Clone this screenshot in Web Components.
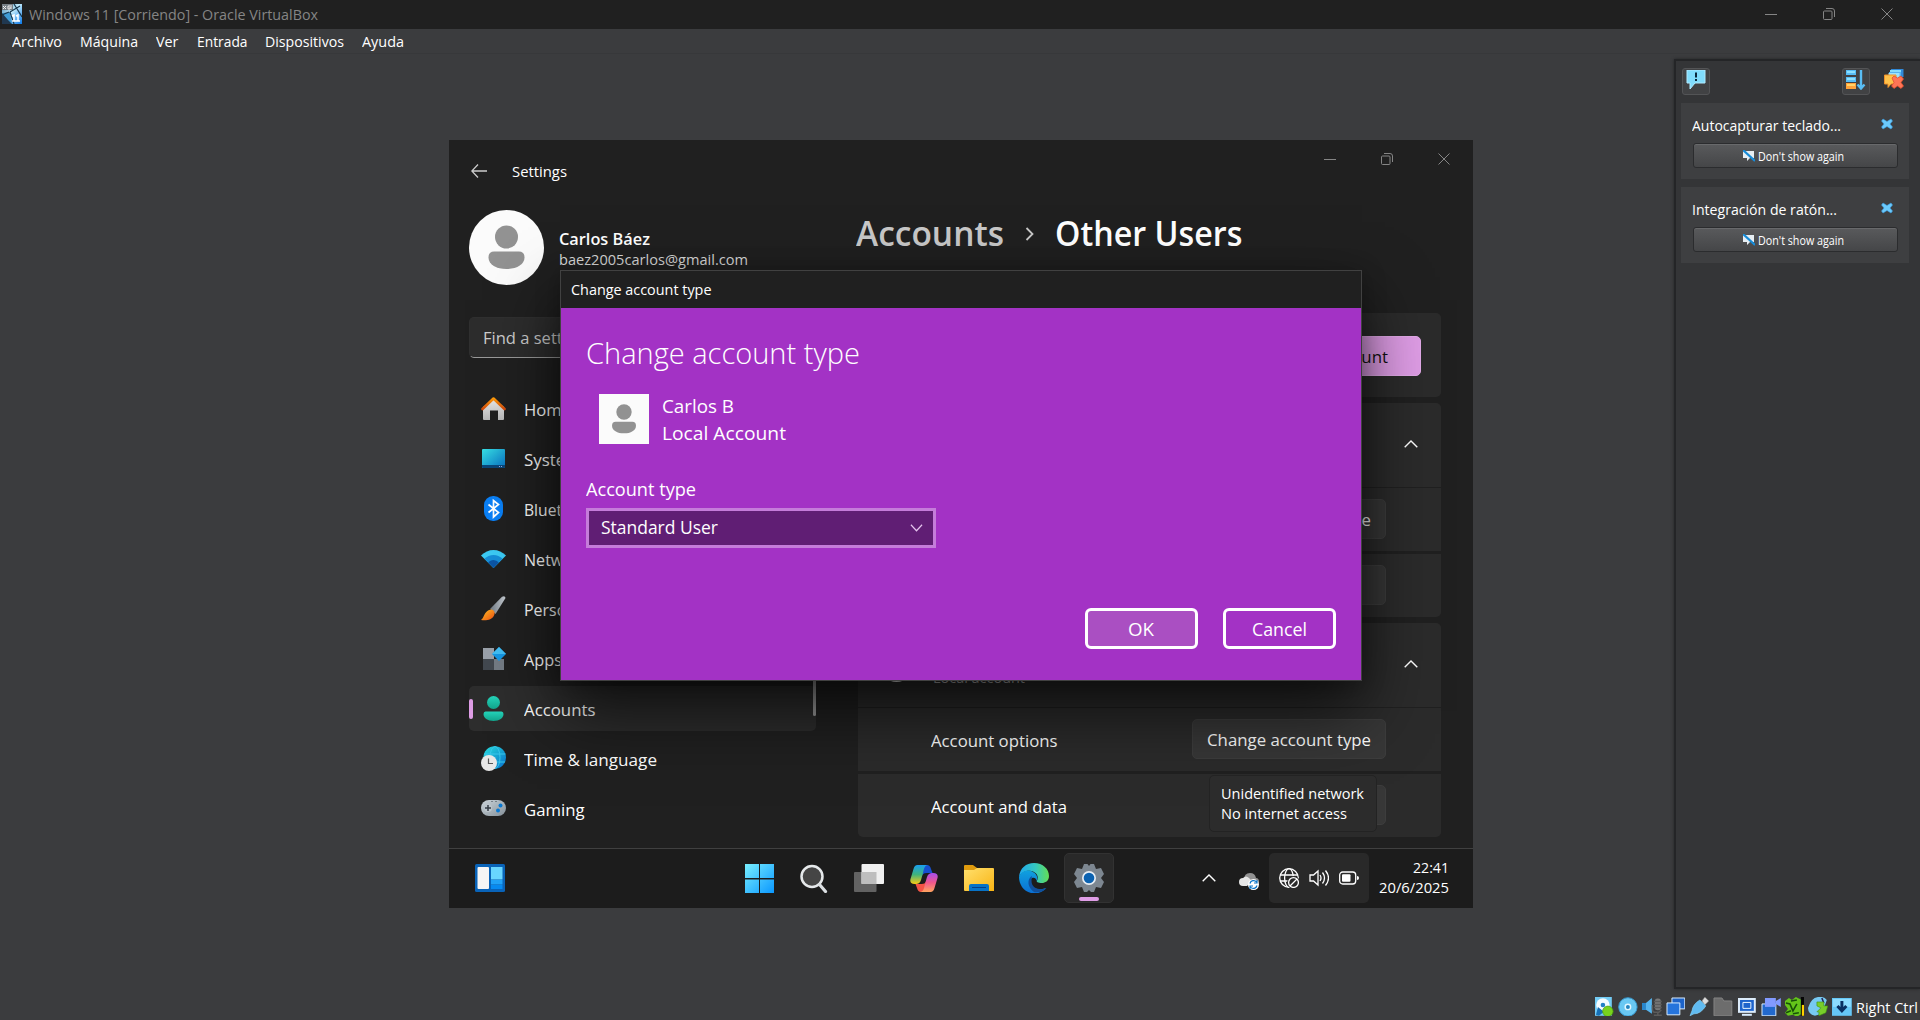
<!DOCTYPE html>
<html lang="es">
<head>
<meta charset="utf-8">
<title>Windows 11 [Corriendo] - Oracle VirtualBox</title>
<style>
html,body{margin:0;height:100%;overflow:hidden;background:#3b3c3e}
body{font-family:"Open Sans","Noto Sans",sans-serif;color:#fff}
</style>
</head>
<body>
<vbox-window></vbox-window>
<script>
const icons = {
vbox:['0 0 20 20','<defs><linearGradient id="a" x2="1" y2="1"><stop stop-color="#4c87b0"/><stop offset=".45" stop-color="#bfe9fb"/><stop offset="1" stop-color="#0877e8"/></linearGradient></defs><path d="M0 0h20v20H0z" fill="url(#a)"/><path d="M0 0h11v6H0z" fill="#777f86"/><path d="M1 2l3 3m0-3L1 5m7-3H6v3h2V3M9 1v4" stroke="#eee" fill="none"/><path d="M0 9l8-1 2 12H0z" fill="#3e9bd5"/><path d="M0 9l6 7 4 4H0z" fill="#203850"/><path d="M8 8L18 2M8 8l4 12M12 0l8 13M7 8L0 11" stroke="#17384f" stroke-width="1.2" fill="none"/><path d="M10 12l2-1v6m-2 0h4m0-5l2-1v6m-2 0h4" stroke="#fff" stroke-width="1.5" fill="none"/>'],
min:['0 0 12 12','<path d="M0 6.5h12" stroke="currentColor"/>'],
restore:['0 0 12 12','<path d="M.5 4q0-1 1-1H8q1 0 1 1v6.500q0 1-1 1H1.500q-1 0-1-1zM3 .5h6q2.500 0 2.500 2.500v6" fill="none" stroke="currentColor"/>'],
close:['0 0 12 12','<path d="M.5.5l11 11M11.500.5l-11 11" stroke="currentColor"/>'],
back:['0 0 16 14','<path d="M16 7H1M7 .5L.8 7 7 13.500" stroke="#ccc" stroke-width="1.300" fill="none"/>'],
user:['0 0 75 75','<path d="M0 0h75v75H0z" fill="#fbfbfb"/><circle cx="37.500" cy="27" r="11.500" fill="#929292"/><path d="M25 41.500h25q5.500 0 5.500 6c0 7-8 11.500-18 11.500s-18-4.500-18-11.500q0-6 5.500-6z" fill="#929292"/>'],
up:['0 0 14 8','<path d="M.7 7.300L7 1l6.300 6.300" stroke="#fff" stroke-width="1.400" fill="none"/>'],
down:['0 0 14 8','<path d="M1 .8l6 6 6-6" stroke="#e5c5ee" stroke-width="1.300" fill="none"/>'],
right:['0 0 9 14','<path d="M1.500 1l6 6-6 6" stroke="#c8c8c8" stroke-width="1.800" fill="none"/>'],
home:['0 0 25 25','<defs><linearGradient id="a" x2="0" y2="1"><stop stop-color="#e8e8e8"/><stop offset="1" stop-color="#b8b8b8"/></linearGradient><linearGradient id="b" x2="0" y2="1"><stop stop-color="#ff9a0a"/><stop offset="1" stop-color="#d24a0b"/></linearGradient></defs><path d="M2 11L12.500 3 23 11v12q0 1-1 1h-5v-9.500H9V24H3q-1 0-1-1z" fill="url(#a)"/><path d="M1.500 13L12.500 2.500 23.500 13" fill="none" stroke="url(#b)" stroke-width="2.600" stroke-linecap="round" stroke-linejoin="round"/>'],
system:['0 0 25 25','<defs><linearGradient id="a" x2="1" y2="1"><stop stop-color="#37e0e4"/><stop offset="1" stop-color="#0871c4"/></linearGradient></defs><rect x="1" y="3" width="23" height="19" rx="1" fill="url(#a)"/><path d="M1 19h23v2q0 1-1 1H2q-1 0-1-1z" fill="#0a4679"/><path d="M18 20.500h1m1 0h1" stroke="#9ad"/>'],
bt:['0 0 25 25','<rect x="3" y="0" width="19" height="25" rx="9" fill="#0a7ff5"/><path d="M7.500 8.500l10 8-5 4.500V4.500l5 4-10 8" fill="none" stroke="#fff" stroke-width="1.700"/>'],
wifi:['0 0 25 25','<path d="M12.500 4C8 4 3.500 6 0 9.500L12.500 22 25 9.500C21.500 6 17 4 12.500 4z" fill="#3ccbf4"/><path d="M12.500 9c-3.500 0-6.500 1.300-9 3.800l9 9.200 9-9.200c-2.500-2.500-5.500-3.800-9-3.800z" fill="#168ed8"/><path d="M12.500 14c-2 0-4 .9-5.300 2.400L12.500 22l5.300-5.600A7.500 7.500 0 0012.500 14z" fill="#0c55a5"/>'],
brush:['0 0 25 25','<defs><linearGradient id="a" x2="1"><stop stop-color="#6f7983"/><stop offset="1" stop-color="#c6ccd2"/></linearGradient><linearGradient id="b" x2="1" y2="1"><stop stop-color="#ffc525"/><stop offset="1" stop-color="#ef4d12"/></linearGradient></defs><path d="M9 13L21 .8q3-1.500 3.500 1.200L14.500 18z" fill="url(#a)"/><path d="M8 14c4-2 7 2 5 5.500C11 24 5 25 0 24c3-2 3-8 8-10z" fill="url(#b)"/>'],
apps:['0 0 25 25','<path d="M2 2h11v11H2z" fill="#9aa1aa"/><path d="M2 13h11v11H2z" fill="#42484f"/><path d="M13 13h10v11H13z" fill="#737b84"/><path d="M18 1l7 7-7 7-7-7z" fill="#1597e5"/><path d="M18 1l7 7h-14z" fill="#42bef4"/>'],
account:['0 0 25 25','<defs><linearGradient id="a" x2="0" y2="1"><stop stop-color="#25d5bb"/><stop offset="1" stop-color="#12a58d"/></linearGradient></defs><circle cx="12.500" cy="6.500" r="6.500" fill="url(#a)"/><path d="M4.500 15.500h16q2 0 2 2.500c0 4-4 7-10 7s-10-3-10-7q0-2.500 2-2.500z" fill="url(#a)"/>'],
time:['0 0 25 25','<defs><linearGradient id="a" x2="1" y2="1"><stop stop-color="#28dfdc"/><stop offset="1" stop-color="#086dcb"/></linearGradient></defs><circle cx="13.700" cy="11.500" r="11.300" fill="url(#a)"/><path d="M3 8h21.500M4 16h20" stroke="#39c7eb"/><ellipse cx="14" cy="11.500" rx="5" ry="11" fill="none" stroke="#39c7eb"/><circle cx="8" cy="17" r="8" fill="#e7e7e7"/><path d="M7.500 12.500V17.500H12" fill="none" stroke="#555" stroke-width="1.200"/>'],
game:['0 0 25 25','<defs><linearGradient id="a" x2="1" y2="1"><stop stop-color="#ccd4da"/><stop offset="1" stop-color="#849099"/></linearGradient></defs><rect y="4" width="25" height="16" rx="8" fill="url(#a)"/><circle cx="7" cy="12" r="4" fill="#bcc5cc"/><path d="M4 12h6M7 9v6" stroke="#353d46" stroke-width="1.500"/><circle cx="19.500" cy="9.500" r="2" fill="#0878d1"/><circle cx="17" cy="14.500" r="2" fill="#0878d1"/><path d="M10.500 5.500h1m3 0h1" stroke="#37404a"/>'],
widgets:['0 0 30 28','<rect width="30" height="28" rx="1.500" fill="#0963b8"/><rect x="2.500" y="3" width="11.500" height="22" rx="1" fill="#f5f5f5"/><path d="M16 3h11.500v12.500H16z" fill="#69d6ff"/><path d="M16 16h11.500v4.500H16z" fill="#20a2f7"/><path d="M16 21h11.500v4H16z" fill="#078af0"/>'],
start:['0 0 29 29','<defs><linearGradient id="a" gradientUnits="userSpaceOnUse" x2="29" y2="29"><stop stop-color="#78efff"/><stop offset="1" stop-color="#0a97ff"/></linearGradient></defs><path d="M0 0h14v14H0zM15 0h14v14H15zM0 15.500h14V29H0zM15 15.500h14V29H15z" fill="url(#a)"/>'],
search:['0 0 28 29','<circle cx="12" cy="12.500" r="10.500" fill="#454545" stroke="#e6e9eb" stroke-width="2.500"/><path d="M19.500 20.500l6 7" stroke="#dce0e3" stroke-width="3.200" stroke-linecap="round"/>'],
task:['0 0 30 28','<rect y="8" width="22.500" height="20" rx="1" fill="#626262"/><rect x="7.500" width="22.500" height="20" rx="1" fill="#f0f0f0"/><path d="M7.500 8h15v12h-15z" fill="#bebebe"/>'],
copilot:['0 0 28 27','<defs><linearGradient id="a" x2="0" y2="1"><stop stop-color="#199ff0"/><stop offset=".5" stop-color="#3fb47c"/><stop offset="1" stop-color="#fccd13"/></linearGradient><linearGradient id="b" x2="0" y2="1"><stop stop-color="#a44df0"/><stop offset=".5" stop-color="#ef568d"/><stop offset="1" stop-color="#ffa45f"/></linearGradient></defs><path d="M14 0h3q3 0 4 4l1.500 4h-6c-3 0-4 1-5 4z" fill="#164fd0"/><path d="M14 27h-3q-3 0-4-4l-1.500-4h6c3 0 4-1 5-4z" fill="#f35345"/><path d="M7.500 0H18c-3 0-4 3-5 8l-2 7c-1 3-3 4-5 4C1 19.500-.3 17 .5 14L3.500 4q1-4 4-4z" fill="url(#a)"/><path d="M20.500 27H10c3 0 4-3 5-8l2-7c1-3 3-4 5-4 5-.5 6.300 2 5.500 5l-3 10q-1 4-4 4z" fill="url(#b)"/>'],
folder:['0 0 30 27','<defs><linearGradient id="a" x2="1" y2="1"><stop stop-color="#ffe06d"/><stop offset="1" stop-color="#f9b414"/></linearGradient></defs><path d="M0 1q0-1 1-1h8l4 3v4H0z" fill="#df9b0d"/><path d="M0 5h10l3-2h16q1 0 1 1v22H1q-1 0-1-1z" fill="url(#a)"/><path d="M5 26v-5q0-2 2-2h16q2 0 2 2v5z" fill="#0873c7"/><path d="M8 22.500h14" stroke="#063f86"/>'],
edge:['0 0 30 30','<defs><linearGradient id="a" x2="1"><stop stop-color="#20a8ee"/><stop offset=".55" stop-color="#35c8c0"/><stop offset="1" stop-color="#63df55"/></linearGradient><linearGradient id="b" x2="0" y2="1"><stop stop-color="#0fa0df"/><stop offset="1" stop-color="#0b6fd3"/></linearGradient></defs><path d="M0 14C1 5 7 0 15 0c9 0 15 6 15 13 0 5-4 7-7 7-4 0-6-1-5-2.500C20 14 18 9 12 8 7 7 2 10 0 14z" fill="url(#a)"/><path d="M0 14C2 8 9 6 14 9c4 2 5 6 4 9-1-3-3-4-5-3-2 2-2 5 0 8 3 4 8 4 14 2-4 5-9 6-15 5C4 28 0 21 0 14z" fill="url(#b)"/><path d="M13 13C8 16 8 24 15 29c6 1 10-1 12.500-4-7 3-13 0-14.500-4-.8-2.500-.5-6 0-8z" fill="#10509d"/>'],
gear:['0 0 30 30','<path d="M12 1h1.500l1.500 2 1.500-2H20l2 5 5-1 3 6-3 4 3 4-3 6-5-1-2 5h-3l-2-2-2 2h-3l-2-5-5 1-3-6 3-4-3-4 3-6 5 1 2-5z" fill="#7d8791"/><circle cx="15" cy="15" r="7" fill="#e7eef5"/><circle cx="15" cy="15" r="5.300" fill="#0b62b1"/>'],
cloud:['0 0 20 18','<path d="M5 8Q5 1 11 1q5 0 6 5 3 0 3 4l-4 3H6z" fill="#929292"/><path d="M0 10q0-4 4-4 3-3 6 0l3 3-5 5H4q-4 0-4-4z" fill="#e6e6e6"/><circle cx="14.500" cy="12.500" r="5.500" fill="#fff"/><path d="M11 11.500a3.700 3.700 0 016.500-1.500m.5 3.500a3.700 3.700 0 01-6.500 1.500M18 8v3h-3m-4 6v-3h3" fill="none" stroke="#0873c8" stroke-width="1.200"/>'],
globe:['0 0 20 20','<g fill="none" stroke="#fff" stroke-width="1.300"><circle cx="10" cy="10" r="9.300"/><ellipse cx="10" cy="10" rx="4.400" ry="9.300"/><path d="M1 7h18M1 13h18"/></g><circle cx="14.500" cy="14.500" r="6.500" fill="#292929"/><circle cx="14.500" cy="14.500" r="4.900" fill="none" stroke="#fff" stroke-width="1.300"/><path d="M11 18l7-7" stroke="#fff" stroke-width="1.300"/>'],
sound:['0 0 20 20','<g fill="none" stroke="#fff" stroke-width="1.300"><path d="M1 7h3.500L9 3v14l-4.500-4H1z"/><path d="M11 7q2 3 0 6m2.500-8.500q4 5.500 0 11m3-13q6 7.500 0 15"/></g>'],
battery:['0 0 20 14','<rect x=".7" y="1" width="16" height="12" rx="3" fill="none" stroke="#fff" stroke-width="1.300"/><rect x="3" y="3.300" width="8.500" height="7.400" rx="1" fill="#fff"/><path d="M18 5q2 0 2 2t-2 2z" fill="#fff"/>'],
notice:['0 0 20 20','<path d="M1 0h18v13H9l-5 6v-6H1z" fill="#80dcfc" stroke="#afeaff"/><path d="M10 2.500v5" stroke="#09263b" stroke-width="2"/><path d="M10 9v2" stroke="#09263b" stroke-width="2"/>'],
sort:['0 0 20 20','<path d="M0 0h10v5H0zM0 7h10v5H0z" fill="#57bdf6"/><path d="M0 13h10v6H0z" fill="#ffa23a"/><path d="M1 1h8v2H1zM1 8h8v2H1z" fill="#8ce0ff"/><path d="M1 14h8v2H1z" fill="#ffd36a"/><path d="M15 0v17M11.500 14.500L15 18.500l3.500-4" stroke="#59bdf4" stroke-width="2.400" fill="none"/>'],
clear:['0 0 20 20','<path d="M7 0h12.500v8H7z" fill="#3189d8"/><path d="M6 1h11v7H6z" fill="#86dcfb"/><path d="M5 3h12v5H5z" fill="#58b2ee"/><path d="M4.500 4h11v5h-11z" fill="#9ce3fc"/><path d="M.5 6H12v9H7l-3 3.500V15H.5z" fill="#ffc24b" stroke="#ef902b"/><path d="M8 9l2-2 3.500 2L17 7l2.500 3-2.500 3.500 2.500 3.500-2.500 2.500-3.500-2.500-3.500 2.500L7.500 17l2.500-3.500z" fill="#ff7556" stroke="#e04c2c" stroke-width=".8"/>'],
x:['0 0 12 12','<path d="M2 1l4 2.500L10 1l1.500 2L9 6l2.500 3-1.500 2-4-2.500L2 11 .5 9 3 6 .5 3z" fill="#6bcafb" stroke="#3a9ce3" stroke-width=".6"/>'],
hide:['0 0 12 12','<path d="M0 1h11v7H7l-3 3V8H0z" fill="#e7eef3"/><path d="M0 0l12 11" stroke="#178bd7" stroke-width="2.200"/>'],
disk:['0 0 20 20','<path d="M1 0h17v19H1z" fill="#73ccf5"/><circle cx="9" cy="8" r="6.800" fill="#f5fcff"/><circle cx="9" cy="8" r="2.300" fill="#2381c5"/><path d="M2 18l2-8 6 5-5 4z" fill="#1670b7"/><circle cx="14" cy="14.500" r="5.300" fill="#78d31d" stroke="#459b08" stroke-width=".7"/>'],
cd:['0 0 20 20','<circle cx="10" cy="10" r="9.300" fill="#69c8f3" stroke="#379bd1"/><circle cx="10" cy="10" r="3.500" fill="#e0f7ff"/><circle cx="10" cy="10" r="2" fill="#2484bf"/>'],
audio:['0 0 20 20','<path d="M0 6h4l6-5v16l-6-4H0z" fill="#55b5f0"/><path d="M0 6h4v7H0z" fill="#2987cd"/><rect x="13" y="1.500" width="6" height="12" rx="2.500" fill="#787878"/><path d="M10.500 8v4q0 3.500 3.500 3.500h3l2.500-2.500M16 15v3.500M12 18.500h8M12 4.500h8m-8 3h8m-8 3h8" stroke="#5b5b5b" stroke-width="1.500" fill="none"/>'],
screens:['0 0 20 20','<path d="M6 1h13v11H6z" fill="#1d63c8" stroke="#d9edff"/><path d="M1 6h13v12H1z" fill="#2574dc" stroke="#d9edff"/>'],
usb:['0 0 20 20','<path d="M13 4l3-4 4 4-4 4z" fill="#ddd" stroke="#777" stroke-width=".6"/><path d="M11 3l6 6q-5 8-12 8l-4 2 2-5Q4 7 11 3z" fill="#60bbf1" stroke="#89d8ff" stroke-width=".6"/>'],
share:['0 0 20 20','<path d="M1 1h8l2 3h8v15H1z" fill="#6d6d6d" stroke="#858585"/>'],
display:['0 0 20 20','<path d="M1 1h18v15H1z" fill="#ddecfb"/><path d="M3 3h14v11H3z" fill="#1d63cc"/><path d="M6 5.500h8v6H6z" fill="none" stroke="#e7f4ff"/><path d="M5 18h10" stroke="#d9edff" stroke-width="2"/>'],
record:['0 0 20 20','<path d="M1 7h14v12H1z" fill="#2269cd" stroke="#d9edff"/><path d="M4 1h11v9H4z" fill="#829aff"/><path d="M15 4l5-3v9l-5-3z" fill="#829aff"/>'],
cpu:['0 0 20 20','<path d="M0 4l4-3 3 2 4-3 6 3v14l-5 3-4-2-5 1-3-3 3-4-3-4z" fill="#64c51a"/><path d="M1 6l4 1 3 7 4-7M6 4l6-1M1 16l5-2M8 17l6-1" fill="none" stroke="#174f08" stroke-width="1.600"/><path d="M16 0h4v20h-4z" fill="#050505"/><path d="M17 8h3v11h-3z" fill="#ffd000"/>'],
mouse:['0 0 20 20','<path d="M10 0q6-1 9 3l-5 14-7 2Q0 17 0 11 3 1 10 0z" fill="#77c9f2"/><path d="M14 1l2 5" stroke="#225" stroke-width="1.500"/><path d="M9 5h7v4h4l-2 7-7 3v-4H9l4-4-4-2z" fill="#78ce2a" stroke="#3c9210" stroke-width=".6"/>'],
key:['0 0 20 20','<path d="M0 1h20v18H0z" fill="#66c7f6"/><path d="M1 2h18v8H1z" fill="#8cdcff"/><path d="M10 4v9M5.500 9l4.500 5 4.500-5" stroke="#092f61" stroke-width="3" fill="none"/>']
};
const define=(name,css,html)=>customElements.define(name,class extends HTMLElement{
  constructor(){super();this.attachShadow({mode:'open'}).innerHTML=`<style>:host{display:block;box-sizing:border-box}*{box-sizing:border-box}${css}</style>${html}`}
});
customElements.define('ui-icon',class extends HTMLElement{
  connectedCallback(){
    const [box,art]=icons[this.getAttribute('name')],w=this.getAttribute('w'),h=this.getAttribute('h')||w;
    if(!this.shadowRoot)this.attachShadow({mode:'open'});
    this.shadowRoot.innerHTML=`<style>:host{display:block;flex:none;width:${w}px;height:${h}px}svg{display:block}</style><svg width="${w}" height="${h}" viewBox="${box}" preserveAspectRatio="none">${art}</svg>`;
  }
});
/* Text set to a given advance width: glyphs are condensed to fit. */
customElements.define('fit-text',class extends HTMLElement{
  connectedCallback(){
    if(!this.shadowRoot)this.attachShadow({mode:'open'});
    const w=+this.getAttribute('w'),s=this.getAttribute('size')||17.2;
    this.shadowRoot.innerHTML=`<style>:host{display:block;flex:none;width:${w}px;font-size:${s}px;line-height:${this.getAttribute('lh')||24}px;white-space:nowrap}span{display:inline-block;transform-origin:0 50%}</style><span><slot></slot></span>`;
    const span=this.shadowRoot.querySelector('span');
    span.style.transform=`scaleX(${w/span.getBoundingClientRect().width})`;
  }
});
define('nav-item',`:host{display:flex;align-items:center;height:45px;width:347px;padding-left:12px;border-radius:5px;gap:18px;color:#fff}
:host([selected]){background:#2d2d2d;padding-left:0}.pill{display:none}:host([selected]) .pill{display:block;width:4px;height:20px;border-radius:2px;background:#df9de6;margin-right:-10px}
.label{padding-top:3px}`,`<div class="pill"></div><slot name="icon"></slot><div class="label"><slot></slot></div>`);
define('push-button',`:host{display:flex;align-items:center;justify-content:center;height:40px;flex:none;border-radius:5px;background:#373737;border:1px solid #3d3d3d;color:#fff;padding:2px 1px 0 0}
:host([accent]){background:#df9de6;border-color:#e3aae9;color:#111}
:host([dialog]){height:41px;width:113px;border:3px solid #fff;border-radius:6px;background:transparent;padding:0 1px 0 0}:host([primary]){background:#aa4fc2}`,`<slot></slot>`);
define('setting-row',`:host{display:flex;align-items:center;height:63px;background:#2b2b2b;padding:0 55px 0 73px;justify-content:space-between}
:host([head]){height:84px;padding:0 23px 0 20px;border-radius:5px 5px 0 0}:host([last]){border-radius:0 0 5px 5px}:host([solo]){border-radius:5px;padding:2px 20px 0}`,`<slot></slot>`);
define('settings-nav',`:host{width:347px;flex:none;position:relative}.profile{display:flex;height:75px;gap:15px;margin-top:8px}.avatar{border-radius:50%;overflow:hidden;width:75px;height:75px}
.names{padding-top:17px}.mail{color:#ddd;margin-top:-2px}.find{height:41px;margin-top:32px;padding:8px 13px;background:#2d2d2d;border:1px solid #303030;border-bottom:1px solid #9a9a9a;border-radius:5px;color:#ccc}
.list{display:flex;flex-direction:column;gap:5px;margin-top:28px}.scroll{position:absolute;right:0;top:350px;width:3px;height:164px;border-radius:2px;background:#9b9b9b}`,
`<div class="profile"><div class="avatar"><ui-icon name="user" w="75"></ui-icon></div><div class="names"><fit-text w="91" size="17" style="font-weight:600">Carlos Báez</fit-text><fit-text class="mail" w="189" size="14.700" lh="20">baez2005carlos@gmail.com</fit-text></div></div>
<div class="find"><fit-text w="103">Find a setting</fit-text></div>
<div class="list">${[['home','Home',47],['system','System',57],['bt','Bluetooth',72],['wifi','Network',64],['brush','Personal',65],['apps','Apps',38],['account','Accounts',71.5],['time','Time &amp; language',133],['game','Gaming',60.5]].map((a,i)=>`<nav-item ${i==6?'selected':''}><ui-icon slot="icon" name="${a[0]}" w="25"></ui-icon><fit-text w="${a[2]}">${a[1]}</fit-text></nav-item>`).join('')}</div><div class="scroll"></div>`);
define('settings-content',`:host{width:583px;flex:none}.crumb{display:flex;align-items:center;height:50px;margin:6px 0 0 -2px;font-weight:600}.crumb ui-icon{margin:2px 21px 0 21px}.cards{display:flex;flex-direction:column;gap:6px;margin-top:55px}.group{display:flex;flex-direction:column}.group :nth-child(2){margin:1px 0 3px}
.group .chev{margin-top:1px}.row-text{margin-top:2px}
.id{display:flex;gap:20px;align-items:center;color:#fff;padding-left:2px;margin-top:1px}.disc{width:33px;height:33px;border-radius:50%;overflow:hidden}.names{padding-top:7px}`,
`<div class="crumb"><fit-text w="148" size="34.500" lh="50" style="color:#c8c8c8">Accounts</fit-text><ui-icon name="right" w="9" h="14"></ui-icon><fit-text w="187.500" size="34.500" lh="50">Other Users</fit-text></div>
<div class="cards"><setting-row solo head><fit-text w="130">Add other user</fit-text><push-button accent style="width:164px"><fit-text w="98">Add account</fit-text></push-button></setting-row>
<div class="group"><setting-row head><span></span><ui-icon class="chev" name="up" w="14" h="8"></ui-icon></setting-row><setting-row><fit-text class="row-text" w="126">Account options</fit-text><push-button style="width:194px"><fit-text w="164">Change account type</fit-text></push-button></setting-row><setting-row last><fit-text class="row-text" w="136">Account and data</fit-text><push-button style="width:92px"></push-button></setting-row></div>
<div class="group"><setting-row head><div class="id"><div class="disc"><ui-icon name="user" w="33"></ui-icon></div><div class="names"><fit-text w="66" lh="20">Carlos B</fit-text><fit-text w="92" size="14.700" lh="22" style="color:#bbb">Local account</fit-text></div></div><ui-icon class="chev" name="up" w="14" h="8"></ui-icon></setting-row><setting-row><fit-text class="row-text" w="126.500">Account options</fit-text><push-button style="width:194px"><fit-text w="164">Change account type</fit-text></push-button></setting-row><setting-row last><fit-text class="row-text" w="136">Account and data</fit-text><push-button style="width:92px"></push-button></setting-row></div></div>`);
define('account-dialog',`:host{width:802px;height:411px;border:1px solid #414141;background:#a332c5;box-shadow:0 30px 64px rgba(0,0,0,.68),0 3px 22px rgba(0,0,0,.25)}
.title{height:37px;background:#202020;padding:6px 10px}.body{padding:21px 25px;display:flex;flex-direction:column}.who{display:flex;margin:15px 0 0 13px;gap:13px}.type{margin-top:31px}
.select{display:flex;align-items:center;justify-content:space-between;width:350px;height:40px;border:3px solid #c57cda;background:#601e74;padding:0 10px 2px 12px;margin-top:7px}.buttons{display:flex;gap:25px;margin:60px 0 0 499px}`,
`<div class="title"><fit-text w="140.500" size="14.700">Change account type</fit-text></div><div class="body"><fit-text w="274" size="29.500" lh="48" style="font-weight:300">Change account type</fit-text>
<div class="who"><ui-icon name="user" w="50" style="margin-top:2px"></ui-icon><div><fit-text w="72" size="18.300" lh="27">Carlos B</fit-text><fit-text w="124" size="18.300" lh="27">Local Account</fit-text></div></div>
<fit-text class="type" w="110" size="18">Account type</fit-text><div class="select"><fit-text w="117" size="18">Standard User</fit-text><ui-icon name="down" w="13" h="8" style="margin-top:2px"></ui-icon></div>
<div class="buttons"><push-button dialog primary><fit-text w="26" size="18">OK</fit-text></push-button><push-button dialog><fit-text w="55" size="18">Cancel</fit-text></push-button></div></div>`);
define('task-bar',`:host{display:flex;height:60px;flex:none;border-top:1px solid #404040;background:#1c1c1c;align-items:center}.widgets{padding:0 0 1px 26px;width:282px}.apps{display:flex;flex:none}.app{width:55px;height:59px;display:flex;align-items:center;justify-content:center;padding:0 0 1px 1px}.active{width:50px;height:50px;margin:4px 2px 0 3px;padding:0;background:#292929;border:1px solid #323232;border-radius:5px;position:relative}.active i{position:absolute;bottom:1px;width:20px;height:4px;border-radius:2px;background:#df9de6}
.tray{display:flex;align-items:center;margin:-1px 0 0 86px}.quick{display:flex;align-items:center;justify-content:space-between;width:100px;height:50px;border-radius:5px;background:#292929;padding:0 10px;margin-left:10px}.tray>ui-icon:nth-child(2){margin-left:23px;margin-top:5px}.clock{display:flex;flex-direction:column;align-items:flex-end;width:69px;margin:-3px 0 0 11px}`,
`<div class="widgets"><ui-icon name="widgets" w="30" h="28"></ui-icon></div><div class="apps">${[['start',29,29],['search',28,29],['task',30,28],['copilot',28,27],['folder',30,27],['edge',30,30]].map(a=>`<div class="app"><ui-icon name="${a[0]}" w="${a[1]}" h="${a[2]}"></ui-icon></div>`).join('')}<div class="app active"><ui-icon name="gear" w="30"></ui-icon><i></i></div></div>
<div class="tray"><ui-icon name="up" w="14" h="8"></ui-icon><ui-icon name="cloud" w="20" h="18"></ui-icon><div class="quick"><ui-icon name="globe" w="20"></ui-icon><ui-icon name="sound" w="20"></ui-icon><ui-icon name="battery" w="20" h="14"></ui-icon></div><div class="clock"><fit-text w="36" size="14.700" lh="20">22:41</fit-text><fit-text w="70" size="14.700" lh="20">20/6/2025</fit-text></div></div>`);
define('guest-screen',`:host{width:1024px;height:768px;background:#202020;position:relative;overflow:hidden;display:flex;flex-direction:column}
.bar{height:62px;display:flex;flex:none}.back{display:flex;align-items:center;padding-left:22px;gap:25px;flex:1}.back fit-text{margin-top:-1px}.ctl{display:flex;height:38px;color:#858585;margin-right:1px}.ctl div{width:57px;display:flex;align-items:center;justify-content:center}.main{display:flex;flex:1;min-height:0;padding-left:20px;gap:42px}
account-dialog{position:absolute;left:111px;top:130px}.tip{position:absolute;left:760px;top:635px;width:168px;height:57px;background:#2c2c2c;border:1px solid #232323;border-radius:5px;padding:7px 11px}`,
`<div class="bar"><div class="back"><ui-icon name="back" w="16" h="14"></ui-icon><fit-text w="55" size="14.700">Settings</fit-text></div><div class="ctl"><div><ui-icon name="min" w="12"></ui-icon></div><div><ui-icon name="restore" w="12"></ui-icon></div><div><ui-icon name="close" w="12"></ui-icon></div></div></div>
<div class="main"><settings-nav></settings-nav><settings-content></settings-content></div><task-bar></task-bar><account-dialog></account-dialog><div class="tip"><fit-text w="143" size="14.700" lh="20">Unidentified network</fit-text><fit-text w="126" size="14.700" lh="20">No internet access</fit-text></div>`);
define('notice-card',`:host{height:76px;background:#3e3f41;padding:13px 11px 0 12px}.top{display:flex;justify-content:space-between;height:27px;padding-right:5px}.top slot{display:block;margin-left:-1px}.top ui-icon{margin-top:2px}
button{all:unset;display:flex;box-sizing:border-box;align-items:center;justify-content:center;width:100%;height:25px;gap:3px;padding-right:5px;border:1px solid #2b2c2e;border-radius:3px;background:linear-gradient(#595a5c,#454648);box-shadow:inset 0 1px #68696b}`,
`<div class="top"><slot></slot><ui-icon name="x" w="12"></ui-icon></div><button><ui-icon name="hide" w="12"></ui-icon><fit-text w="86" size="11.700" lh="20">Don't show again</fit-text></button>`);
define('notice-panel',`:host{width:246px;height:930px;background:#343537;border:solid #242527;border-width:2px 0 2px 2px;box-shadow:0 0 3px #242527;padding:7px 11px 0 5px}.tools{display:flex;height:35px;align-items:flex-start}.tool{width:28px;height:27px;background:#414244;border:1px solid #535456;border-radius:3px;display:flex;justify-content:center;padding-top:1px}.cards{display:flex;flex-direction:column;gap:8px}`,
`<div class="tools"><div class="tool" style="margin-left:1px"><ui-icon name="notice" w="20"></ui-icon></div><div class="tool" style="margin-left:auto"><ui-icon name="sort" w="20"></ui-icon></div><ui-icon name="clear" w="20" style="margin:1px 5px 0 14px"></ui-icon></div>
<div class="cards"><notice-card><fit-text w="149" size="14.700" lh="18">Autocapturar teclado...</fit-text></notice-card><notice-card><fit-text w="145" size="14.700" lh="18">Integración de ratón...</fit-text></notice-card></div>`);
define('vbox-window',`:host{width:1920px;height:1020px;display:flex;flex-direction:column;background:#3b3c3e}.title{height:29px;flex:none;background:#202020;display:flex;align-items:center;color:#858585;padding:0 0 1px 2px;gap:7px}.ctl{display:flex;margin-left:auto;padding-right:4px}.ctl div{width:58px;display:flex;justify-content:center}
.menu{height:25px;flex:none;display:flex;align-items:center;gap:18px;padding-left:12px;border-bottom:1px solid #37383a}.work{flex:1;display:flex;justify-content:space-between;padding:5px 0 0 449px;min-height:0}guest-screen{margin-top:81px}.status{height:31px;flex:none;display:flex;align-items:center;justify-content:flex-end;gap:4px;padding:4px 2px 0 0}`,
`<div class="title"><ui-icon name="vbox" w="20"></ui-icon><fit-text w="289" size="14.700">Windows 11 [Corriendo] - Oracle VirtualBox</fit-text><div class="ctl"><div><ui-icon name="min" w="12"></ui-icon></div><div><ui-icon name="restore" w="12"></ui-icon></div><div><ui-icon name="close" w="12"></ui-icon></div></div></div>
<div class="menu">${[['Archivo',50],['Máquina',58],['Ver',22.5],['Entrada',50.5],['Dispositivos',79],['Ayuda',42]].map(a=>`<fit-text w="${a[1]}" size="14.700">${a[0]}</fit-text>`).join('')}</div>
<div class="work"><guest-screen></guest-screen><notice-panel></notice-panel></div>
<div class="status">${['disk','cd','audio','screens','usb','share','display','record','cpu','mouse','key'].map(n=>`<ui-icon name="${n}" w="19.800"></ui-icon>`).join('')}<fit-text w="62" size="15">Right Ctrl</fit-text></div>`);
</script>
</body>
</html>
